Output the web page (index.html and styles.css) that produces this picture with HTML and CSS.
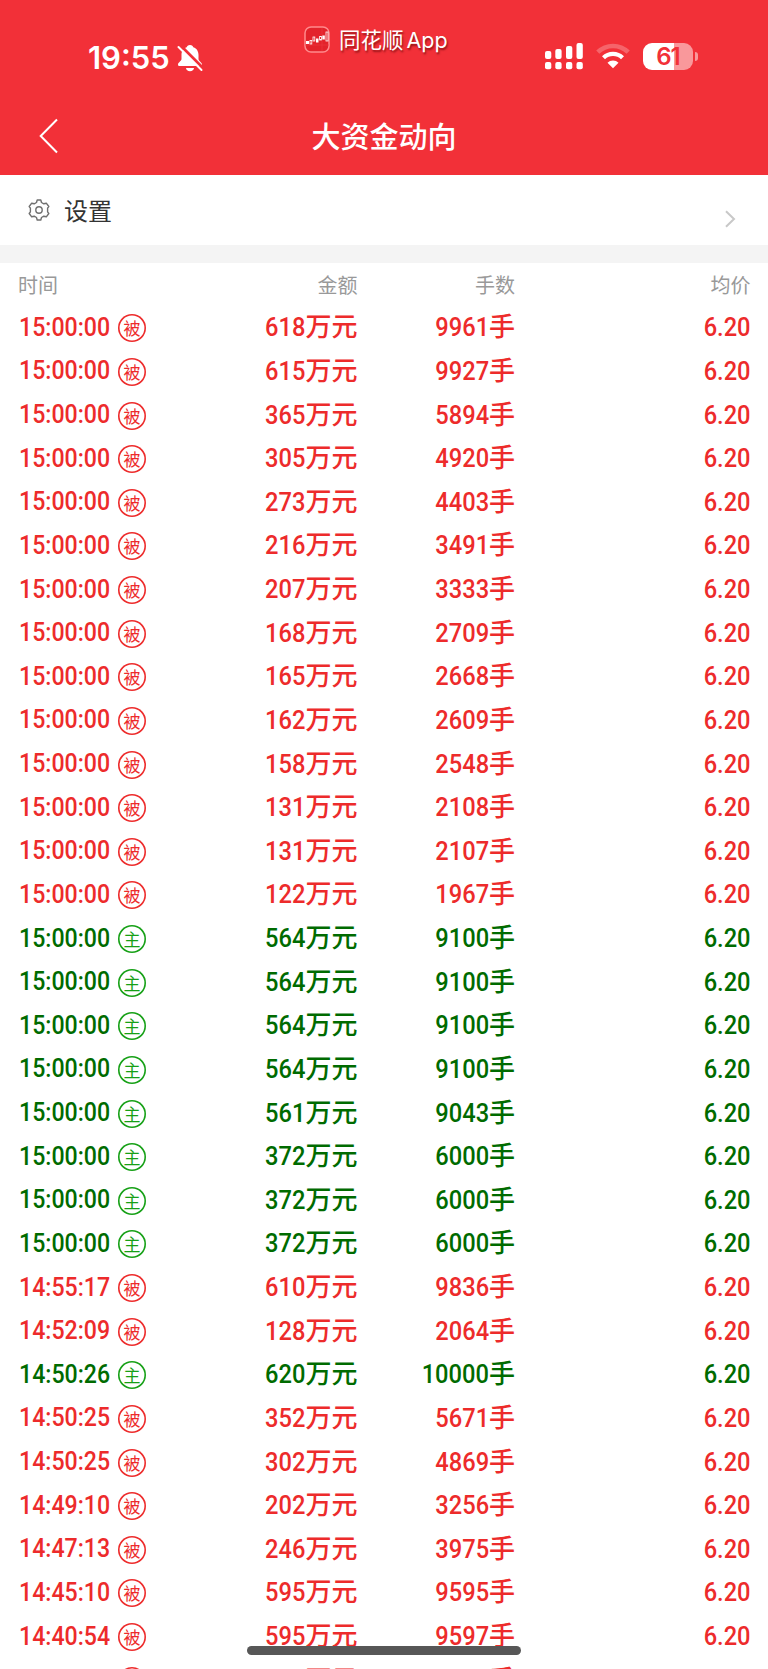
FILE: index.html
```html
<!DOCTYPE html>
<html lang="zh-CN">
<head>
    <meta charset="UTF-8">
    <meta name="viewport" content="width=device-width, initial-scale=1.0">
    <title>大资金动向</title>
    <link rel="stylesheet" href="styles.css">
</head>
<body>

    <header class="header">
        <div class="status-bar">
            <div class="clock">
                <span class="clock-time">19:55</span>
                <svg class="bell" width="26" height="28" viewBox="0 0 26 28">
                    <path d="M13 1C10.900 1 10 2.200 9.700 3.200C6 4.500 4.500 7.500 4.500 11V15C4.500 17 1 18.500 1 20.500C1 21.500 1.700 22 2.700 22H23.300C24.300 22 25 21.500 25 20.500C25 18.500 21.500 17 21.500 15V11C21.500 7.500 20 4.500 16.300 3.200C16 2.200 15.100 1 13 1Z" fill="#fff"/>
                    <path d="M9 24H17C17 26 15.200 27.200 13 27.200S9 26 9 24Z" fill="#fff"/>
                    <path d="M2.500 .5L26 24" stroke="#f23038" stroke-width="3"/>
                    <path d="M1.500 3L24.500 26" stroke="#fff" stroke-width="2" stroke-linecap="round"/>
                </svg>
            </div>
            <div class="app-tag">
                <svg width="26" height="27" viewBox="0 0 26 27">
                    <rect x="1" y="1" width="24" height="25" rx="6" fill="#e3232b" stroke="#ff8a8c" stroke-width="1.500"/>
                    <path d="M1 19H25M18 2V25" stroke="#ee3b42" stroke-width=".6"/>
                    <g fill="#fff">
                        <rect x="2" y="15" width="3" height="3"/>
                        <rect x="12" y="12.500" width="2.500" height="4"/>
                        <rect x="18.300" y="9.500" width="2.500" height="4"/>
                    </g>
                    <g fill="none" stroke="#fff" stroke-width=".8">
                        <rect x="6" y="14.500" width="1.800" height="3.500"/>
                        <rect x="9" y="11" width="1.800" height="4"/>
                        <rect x="15.600" y="10.500" width="1.800" height="3.500"/>
                        <rect x="22" y="6" width="2" height="9"/>
                    </g>
                </svg>
                <span>同花顺<b>App</b></span>
            </div>
            <div class="indicators">
                <svg width="38" height="28" viewBox="0 0 38 28" fill="#fff">
                    <rect x="0" y="9" width="6.300" height="8" rx="2"/>
                    <rect x="10.300" y="7" width="6.300" height="10" rx="2"/>
                    <rect x="21" y="4" width="6.300" height="13" rx="2"/>
                    <rect x="31.500" y="1" width="6.300" height="16" rx="2"/>
                    <rect x="0" y="20" width="6.300" height="7.300" rx="2"/>
                    <rect x="10.300" y="20" width="6.300" height="7.300" rx="2"/>
                    <rect x="21" y="20" width="6.300" height="7.300" rx="2"/>
                    <rect x="31.500" y="20" width="6.300" height="7.300" rx="2"/>
                </svg>
                <svg class="wifi" width="34" height="26" viewBox="0 0 34 26" fill="none">
                    <path d="M1.800 9.200A21.500 21.500 0 0 1 32.200 9.200" stroke="#fff" stroke-opacity=".25" stroke-width="4.500"/>
                    <path d="M7.500 14.800A13.400 13.400 0 0 1 26.500 14.800" stroke="#fff" stroke-width="4.200"/>
                    <path d="M17 25.300L11.500 19.700A7.800 7.800 0 0 1 22.500 19.700Z" fill="#fff"/>
                </svg>
                <div class="battery"><span>61</span></div>
            </div>
        </div>
        <div class="title-bar">
            <svg width="20" height="36" viewBox="0 0 20 36">
                <path d="M18 1.500L1.700 18L18 34.500" fill="none" stroke="#fff" stroke-width="2"/>
            </svg>
            <h1>大资金动向</h1>
        </div>
    </header>

    <div class="settings">
        <svg width="22" height="22" viewBox="0 0 22 22" fill="none" stroke="#707070" stroke-width="1.400" stroke-linejoin="round">
            <path d="M9.200 1H12.800L13.500 3.500L15.800 4.800L18.300 4.200L20.800 7.500L19.600 9.200V12.800L20.800 14.500L18.300 17.800L15.800 17.200L13.500 18.500L12.800 21H9.200L8.500 18.500L6.200 17.200L3.700 17.800L1.200 14.500L2.400 12.800V9.200L1.200 7.500L3.700 4.200L6.200 4.800L8.500 3.500Z"/>
            <circle cx="11" cy="11" r="3.200"/>
        </svg>
        <span>设置</span>
        <svg class="arrow" width="11" height="18" viewBox="0 0 11 18">
            <path d="M1 1.200L9 9L1 16.800" fill="none" stroke="#c8c8c8" stroke-width="2"/>
        </svg>
    </div>

    <main class="list">
        <div class="row list-head">
            <span>时间</span>
            <span>金额</span>
            <span>手数</span>
            <span>均价</span>
        </div>
        <div id="rows"></div>
    </main>

    <div class="home-bar"></div>

    <script>
        // 时间, 类型, 金额(万元), 手数
        const trades = [
            ["15:00:00", "被", 618, 9961],
            ["15:00:00", "被", 615, 9927],
            ["15:00:00", "被", 365, 5894],
            ["15:00:00", "被", 305, 4920],
            ["15:00:00", "被", 273, 4403],
            ["15:00:00", "被", 216, 3491],
            ["15:00:00", "被", 207, 3333],
            ["15:00:00", "被", 168, 2709],
            ["15:00:00", "被", 165, 2668],
            ["15:00:00", "被", 162, 2609],
            ["15:00:00", "被", 158, 2548],
            ["15:00:00", "被", 131, 2108],
            ["15:00:00", "被", 131, 2107],
            ["15:00:00", "被", 122, 1967],
            ["15:00:00", "主", 564, 9100],
            ["15:00:00", "主", 564, 9100],
            ["15:00:00", "主", 564, 9100],
            ["15:00:00", "主", 564, 9100],
            ["15:00:00", "主", 561, 9043],
            ["15:00:00", "主", 372, 6000],
            ["15:00:00", "主", 372, 6000],
            ["15:00:00", "主", 372, 6000],
            ["14:55:17", "被", 610, 9836],
            ["14:52:09", "被", 128, 2064],
            ["14:50:26", "主", 620, 10000],
            ["14:50:25", "被", 352, 5671],
            ["14:50:25", "被", 302, 4869],
            ["14:49:10", "被", 202, 3256],
            ["14:47:13", "被", 246, 3975],
            ["14:45:10", "被", 595, 9595],
            ["14:40:54", "被", 595, 9597],
            ["14:40:54", "被", 595, 9597]
        ];

        document.getElementById("rows").innerHTML = trades.map(([time, type, amount, hands]) => `
            <div class="row ${type === "主" ? "sell" : "buy"}">
                <span class="time"><b>${time}</b><i class="tag">${type}</i></span>
                <span><b>${amount}</b>万元</span>
                <span><b>${hands}</b>手</span>
                <span><b>6.20</b></span>
            </div>`).join("");
    </script>

</body>
</html>
```
FILE: styles.css
```css
* {
    box-sizing: border-box;
}
body {
    margin: 0;
    height: 1669px;
    overflow: hidden;
    background: #fff;
    font-family: "Noto Sans CJK SC", sans-serif;
    color: #333;
}
svg {
    display: block;
    flex: none;
}
.header {
    height: 175px;
    background: #f23038;
    color: #fff;
}
.status-bar {
    height: 100px;
    display: grid;
    grid-template-columns: 304px 1fr 223px;
    align-items: start;
}
.clock {
    display: flex;
    align-items: center;
    padding: 37px 0 0 88px;
}
.clock-time {
    font: 600 31px/40px Inter, sans-serif;
    width: 82px;
    padding-top: 1px;
    white-space: nowrap;
}
.bell {
    margin-left: 7px;
}
.app-tag {
    display: flex;
    align-items: center;
    gap: 9px;
    padding-top: 24px;
    font-size: 21.5px;
    line-height: 30px;
    text-shadow: 1px 2px 2px rgba(80, 0, 0, 0.6);
}
.app-tag b {
    font: 400 21.5px/30px Inter, sans-serif;
    margin-left: 3px;
}
.indicators {
    display: flex;
    align-items: center;
    padding-top: 42px;
}
.wifi {
    margin-left: 13px;
}
.battery {
    position: relative;
    width: 50px;
    height: 27px;
    margin-left: 13px;
    border-radius: 9px;
    background: linear-gradient(90deg, #fff 61%, #f9989b 61%);
    color: #f23038;
    font: 600 24px/27px Inter, sans-serif;
    letter-spacing: -1px;
    text-align: center;
}
.battery::after {
    content: "";
    position: absolute;
    right: -5px;
    top: 9px;
    width: 3px;
    height: 9px;
    border-radius: 0 4px 4px 0;
    background: #f9989b;
}
.title-bar {
    height: 75px;
    display: grid;
    grid-template-columns: 100px 1fr 100px;
    align-items: start;
    padding-top: 17px;
}
.title-bar svg {
    margin: 1px 0 0 39px;
}
.title-bar h1 {
    margin: -1px 0 0;
    font-size: 29px;
    line-height: 38px;
    font-weight: 500;
    text-align: center;
}
.settings {
    height: 70px;
    display: flex;
    align-items: center;
    padding: 0 33px 0 28px;
    font-size: 24px;
}
.settings span {
    margin: -2px 0 0 14px;
}
.settings .arrow {
    margin: 17px -1px 0 auto;
}
.list {
    border-top: 18px solid #f4f4f4;
}
.row {
    height: 43.63px;
    display: grid;
    grid-template-columns: 200px 157.5px 157.5px 235.5px;
    align-items: center;
    font-size: 26px;
    line-height: 38px;
    font-weight: 500;
    text-align: right;
    white-space: nowrap;
    padding-bottom: 1px;
}
/* 数字压窄 */
.row b {
    display: inline-block;
    font-family: Roboto, sans-serif;
    font-size: 26px;
    font-weight: 500;
    transform: scaleX(0.91);
    transform-origin: right;
}
.list-head {
    height: 42px;
    padding: 1px 0 0;
    font-size: 20px;
    font-weight: 400;
    color: #999;
}
.list-head span:first-child {
    text-align: left;
    padding-left: 18px;
}
.buy {
    color: #ed2b2b;
}
.sell {
    color: #006b00;
}
.time {
    display: flex;
    align-items: center;
    padding-left: 19px;
}
.row .time b {
    width: 99px;
    padding-top: 1px;
    text-align: left;
    transform: scaleX(0.89);
    transform-origin: left;
}
.tag {
    width: 28px;
    height: 28px;
    margin-top: 4px;
    border-radius: 50%;
    box-shadow: inset 0 0 0 1.6px;
    font-size: 17px;
    line-height: 27px;
    font-style: normal;
    font-weight: 400;
    text-align: center;
}
.sell .tag {
    color: #16a016;
}
.home-bar {
    position: fixed;
    left: 247px;
    bottom: 14px;
    width: 274px;
    height: 9px;
    border-radius: 5px;
    background: #575757;
}
```
